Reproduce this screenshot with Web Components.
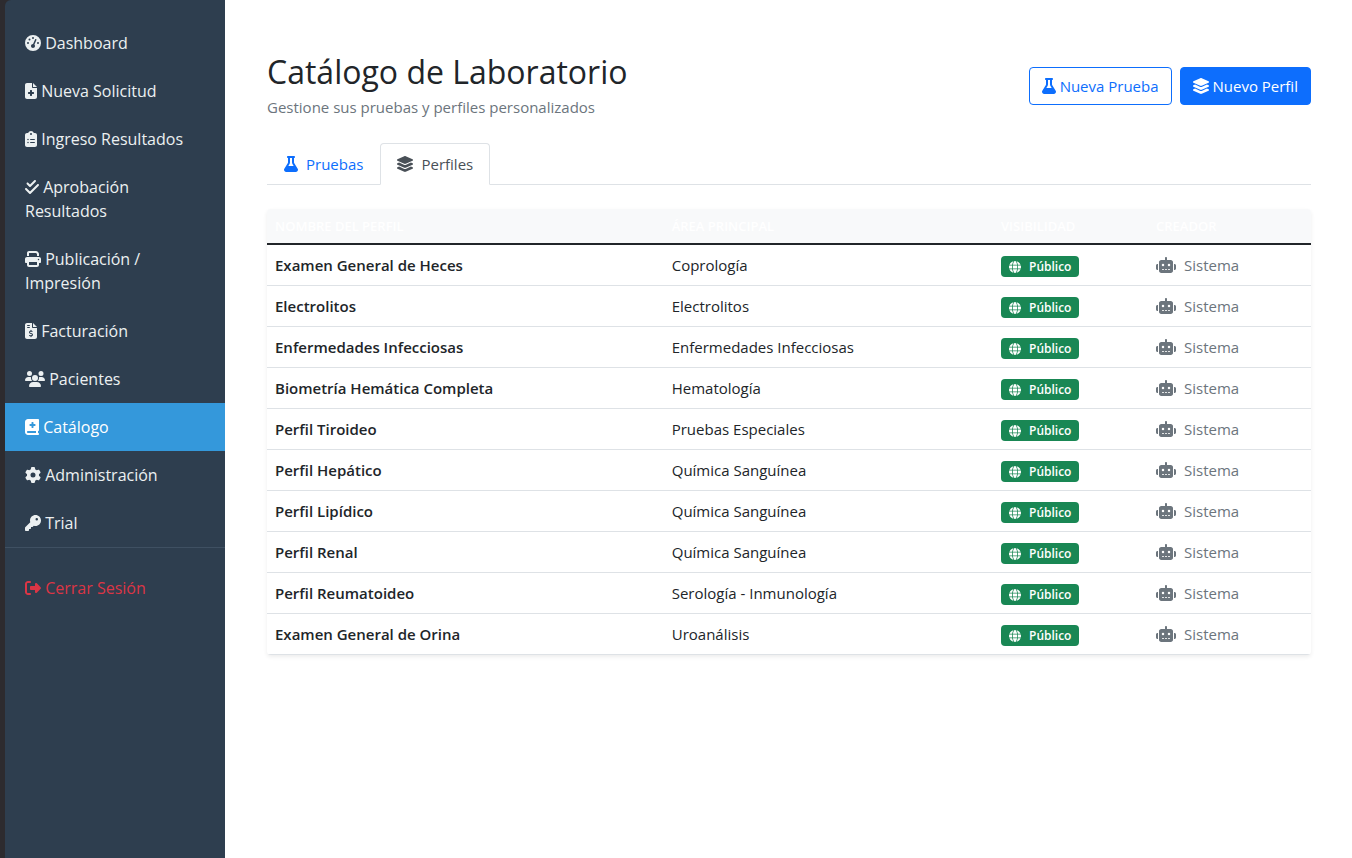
<!DOCTYPE html>
<html lang="es">
<head>
<meta charset="utf-8">
<meta name="viewport" content="width=device-width, initial-scale=1">
<title>Catálogo de Laboratorio</title>
<style>
  html, body { margin: 0; min-height: 100vh; }
  body {
    background: #fff;
    color: #212529;
    font: 400 15px/24px "Open Sans", "Noto Sans", sans-serif;
  }
</style>
</head>
<body>
<lab-app>
  <lab-sidebar slot="sidebar">
    <lab-nav-item icon="gauge">Dashboard</lab-nav-item>
    <lab-nav-item icon="file-medical">Nueva Solicitud</lab-nav-item>
    <lab-nav-item icon="clipboard">Ingreso Resultados</lab-nav-item>
    <lab-nav-item icon="check-double">Aprobación Resultados</lab-nav-item>
    <lab-nav-item icon="print">Publicación / Impresión</lab-nav-item>
    <lab-nav-item icon="invoice">Facturación</lab-nav-item>
    <lab-nav-item icon="users">Pacientes</lab-nav-item>
    <lab-nav-item icon="book-medical" active>Catálogo</lab-nav-item>
    <lab-nav-item icon="gear">Administración</lab-nav-item>
    <lab-nav-item icon="key">Trial</lab-nav-item>
    <lab-nav-item icon="logout" danger slot="footer">Cerrar Sesión</lab-nav-item>
  </lab-sidebar>

  <lab-page-header>
    <span slot="title">Catálogo de Laboratorio</span>
    <span slot="subtitle">Gestione sus pruebas y perfiles personalizados</span>
    <lab-button slot="actions" icon="flask" variant="outline">Nueva Prueba</lab-button>
    <lab-button slot="actions" icon="layers">Nuevo Perfil</lab-button>
  </lab-page-header>
  <lab-tabs>
    <lab-tab icon="flask">Pruebas</lab-tab>
    <lab-tab icon="layers" selected>Perfiles</lab-tab>
  </lab-tabs>
  <lab-profile-table></lab-profile-table>
</lab-app>

<script>
const ICONS = {
  gauge: [0, 512, 'M0 256a256 256 0 1 1 512 0A256 256 0 1 1 0 256zM288 96a32 32 0 1 0 -64 0 32 32 0 1 0 64 0zM256 416c35.3 0 64-28.7 64-64c0-17.4-6.9-33.1-18.1-44.6L366 161.7c5.3-12.1-.2-26.3-12.3-31.6s-26.3 .2-31.6 12.3L257.9 288c-.6 0-1.3 0-1.9 0c-35.3 0-64 28.7-64 64s28.7 64 64 64zM176 144a32 32 0 1 0 -64 0 32 32 0 1 0 64 0zM96 288a32 32 0 1 0 0-64 32 32 0 1 0 0 64zm352-32a32 32 0 1 0 -64 0 32 32 0 1 0 64 0z'],
  'file-medical': [0, 384, 'M64 0C28.7 0 0 28.7 0 64V448c0 35.3 28.7 64 64 64H320c35.3 0 64-28.7 64-64V160H256c-17.7 0-32-14.3-32-32V0H64zM256 0V128H384L256 0zM160 240c0-8.8 7.2-16 16-16h32c8.8 0 16 7.2 16 16v48h48c8.8 0 16 7.2 16 16v32c0 8.8-7.2 16-16 16H224v48c0 8.8-7.2 16-16 16H176c-8.8 0-16-7.2-16-16V352H112c-8.8 0-16-7.2-16-16V304c0-8.8 7.2-16 16-16h48V240z'],
  clipboard: [0, 384, 'M192 0c-41.8 0-77.4 26.7-90.5 64H64C28.7 64 0 92.7 0 128V448c0 35.3 28.7 64 64 64H320c35.3 0 64-28.7 64-64V128c0-35.3-28.7-64-64-64H282.5C269.4 26.7 233.8 0 192 0zm0 64a32 32 0 1 1 0 64 32 32 0 1 1 0-64zM72 272a24 24 0 1 1 48 0 24 24 0 1 1 -48 0zm104-16H304c8.8 0 16 7.2 16 16s-7.2 16-16 16H176c-8.8 0-16-7.2-16-16s7.2-16 16-16zM72 368a24 24 0 1 1 48 0 24 24 0 1 1 -48 0zm88 0c0-8.8 7.2-16 16-16H304c8.8 0 16 7.2 16 16s-7.2 16-16 16H176c-8.8 0-16-7.2-16-16z'],
  'check-double': [0, 448, 'M342.6 86.6c12.5-12.5 12.5-32.8 0-45.3s-32.8-12.5-45.3 0L160 178.7l-57.4-57.4c-12.5-12.5-32.8-12.5-45.3 0s-12.5 32.8 0 45.3l80 80c12.5 12.5 32.8 12.5 45.3 0l160-160zm96 128c12.5-12.5 12.5-32.8 0-45.3s-32.8-12.5-45.3 0L160 402.7 54.6 297.4c-12.5-12.5-32.8-12.5-45.3 0s-12.5 32.8 0 45.3l128 128c12.5 12.5 32.8 12.5 45.3 0l256-256z'],
  print: [0, 512, 'M128 0C92.7 0 64 28.7 64 64v96h64V64H354.7L384 93.3V160h64V93.3c0-17-6.7-33.3-18.7-45.3L400 18.7C388 6.7 371.7 0 354.7 0H128zM384 352v32 64H128V384 368 352H384zm64 32h32c17.7 0 32-14.3 32-32V256c0-35.3-28.7-64-64-64H64c-35.3 0-64 28.7-64 64v96c0 17.7 14.3 32 32 32H64v64c0 35.3 28.7 64 64 64H384c35.3 0 64-28.7 64-64V384zM432 248a24 24 0 1 1 0 48 24 24 0 1 1 0-48z'],
  invoice: [0, 384, 'M64 0C28.7 0 0 28.7 0 64V448c0 35.3 28.7 64 64 64H320c35.3 0 64-28.7 64-64V160H256c-17.7 0-32-14.3-32-32V0H64zM256 0V128H384L256 0zM64 80c0-8.8 7.2-16 16-16h64c8.8 0 16 7.2 16 16s-7.2 16-16 16H80c-8.8 0-16-7.2-16-16zm0 64c0-8.8 7.2-16 16-16h64c8.8 0 16 7.2 16 16s-7.2 16-16 16H80c-8.8 0-16-7.2-16-16zm128 72c8.8 0 16 7.2 16 16v17.3c8.5 1.2 16.7 3.1 24.1 5.1c8.5 2.3 13.6 11 11.3 19.6s-11 13.6-19.6 11.3c-11.1-3-22-5.2-32.1-5.3c-8.4-.1-17.4 1.8-23.6 5.5c-5.7 3.4-8.1 7.3-8.1 12.8c0 3.7 1.3 6.5 7.3 10.1c6.9 4.1 16.6 7.1 29.2 10.9l.5 .1c11.3 3.4 25.3 7.6 36.3 14.6c12.1 7.6 22.4 19.7 22.7 38.2c.3 19.3-9.6 33.3-22.9 41.6c-7.7 4.8-16.4 7.6-25.1 9.1V440c0 8.8-7.2 16-16 16s-16-7.2-16-16V422.2c-11.2-2.1-21.7-5.7-30.9-8.9c-2.1-.7-4.2-1.4-6.2-2.1c-8.4-2.8-12.9-11.9-10.1-20.2s11.9-12.9 20.2-10.1c2.5 .8 4.8 1.6 7.1 2.4c13.6 4.6 24.6 8.4 36.3 8.7c9.1 .3 17.9-1.7 23.7-5.3c5.1-3.2 7.9-7.3 7.8-14c-.1-4.6-1.8-7.8-7.7-11.6c-6.8-4.3-16.5-7.4-29-11.2l-1.6-.5c-11-3.3-24.3-7.3-34.8-13.7c-12-7.2-22.6-18.9-22.7-37.3c-.1-19.4 10.8-32.8 23.8-40.5c7.5-4.4 15.8-7.2 24.1-8.7V232c0-8.8 7.2-16 16-16z'],
  users: [0, 640, 'M144 0a80 80 0 1 1 0 160A80 80 0 1 1 144 0zM512 0a80 80 0 1 1 0 160A80 80 0 1 1 512 0zM0 298.7C0 239.8 47.8 192 106.7 192h42.7c15.9 0 31 3.5 44.6 9.7c-1.3 7.2-1.9 14.7-1.9 22.3c0 38.2 16.8 72.5 43.3 96c-.2 0-.4 0-.7 0H21.3C9.6 320 0 310.4 0 298.7zM405.3 320c-.2 0-.4 0-.7 0c26.6-23.5 43.3-57.8 43.3-96c0-7.6-.7-15-1.9-22.3c13.6-6.3 28.7-9.7 44.6-9.7h42.7C592.2 192 640 239.8 640 298.7c0 11.8-9.6 21.3-21.3 21.3H405.3zM224 224a96 96 0 1 1 192 0 96 96 0 1 1 -192 0zM128 485.3C128 411.7 187.7 352 261.3 352H378.7C452.3 352 512 411.7 512 485.3c0 14.7-11.9 26.7-26.7 26.7H154.7c-14.7 0-26.7-11.9-26.7-26.7z'],
  'book-medical': [0, 448, 'M0 96C0 43 43 0 96 0H384h32c17.7 0 32 14.3 32 32V352c0 17.7-14.3 32-32 32v64c17.7 0 32 14.3 32 32s-14.3 32-32 32H384 96c-53 0-96-43-96-96V96zM64 416c0 17.7 14.3 32 32 32H352V384H96c-17.7 0-32 14.3-32 32zM208 112v48H160c-8.8 0-16 7.2-16 16v32c0 8.8 7.2 16 16 16h48v48c0 8.8 7.2 16 16 16h32c8.8 0 16-7.2 16-16V224h48c8.8 0 16-7.2 16-16V176c0-8.8-7.2-16-16-16H272V112c0-8.8-7.2-16-16-16H224c-8.8 0-16 7.2-16 16z'],
  gear: [0, 512, 'M495.9 166.6c3.2 8.7 .5 18.4-6.4 24.6l-43.3 39.4c1.1 8.3 1.7 16.8 1.7 25.4s-.6 17.1-1.7 25.4l43.3 39.4c6.9 6.2 9.6 15.9 6.4 24.6c-4.4 11.9-9.7 23.3-15.8 34.3l-4.7 8.1c-6.6 11-14 21.4-22.1 31.2c-5.9 7.2-15.7 9.6-24.5 6.8l-55.7-17.7c-13.4 10.3-28.2 18.9-44 25.4l-12.5 57.1c-2 9.1-9 16.3-18.2 17.8c-13.8 2.3-28 3.5-42.5 3.5s-28.7-1.2-42.5-3.5c-9.2-1.5-16.2-8.7-18.2-17.8l-12.5-57.1c-15.8-6.5-30.6-15.1-44-25.4L83.1 425.9c-8.8 2.8-18.6 .3-24.5-6.8c-8.1-9.8-15.5-20.2-22.1-31.2l-4.7-8.1c-6.1-11-11.4-22.4-15.8-34.3c-3.2-8.7-.5-18.4 6.4-24.6l43.3-39.4C64.6 273.1 64 264.6 64 256s.6-17.1 1.7-25.4L22.4 191.2c-6.9-6.2-9.6-15.9-6.4-24.6c4.4-11.9 9.7-23.3 15.8-34.3l4.7-8.1c6.6-11 14-21.4 22.1-31.2c5.9-7.2 15.7-9.6 24.5-6.8l55.7 17.7c13.4-10.3 28.2-18.9 44-25.4l12.5-57.1c2-9.1 9-16.3 18.2-17.8C227.3 1.2 241.5 0 256 0s28.7 1.2 42.5 3.5c9.2 1.5 16.2 8.7 18.2 17.8l12.5 57.1c15.8 6.5 30.6 15.1 44 25.4l55.7-17.7c8.8-2.8 18.6-.3 24.5 6.8c8.1 9.8 15.5 20.2 22.1 31.2l4.7 8.1c6.1 11 11.4 22.4 15.8 34.3zM256 336a80 80 0 1 0 0-160 80 80 0 1 0 0 160z'],
  key: [0, 512, 'M336 352c97.2 0 176-78.8 176-176S433.2 0 336 0S160 78.8 160 176c0 18.7 2.9 36.8 8.3 53.7L7 391c-4.5 4.5-7 10.6-7 17v80c0 13.3 10.7 24 24 24h80c13.3 0 24-10.7 24-24V448h40c13.3 0 24-10.7 24-24V384h40c6.4 0 12.5-2.5 17-7l33.3-33.3c16.9 5.4 35 8.3 53.7 8.3zM376 96a40 40 0 1 1 0 80 40 40 0 1 1 0-80z'],
  logout: [0, 512, 'M377.9 105.9L500.7 228.7c7.2 7.2 11.3 17.1 11.3 27.3s-4.1 20.1-11.3 27.3L377.9 406.1c-6.4 6.4-15 9.9-24 9.9c-18.7 0-33.9-15.2-33.9-33.9l0-62.1-128 0c-17.7 0-32-14.3-32-32l0-64c0-17.7 14.3-32 32-32l128 0 0-62.1c0-18.7 15.2-33.9 33.9-33.9c9 0 17.6 3.6 24 9.9zM160 96L96 96c-17.7 0-32 14.3-32 32l0 256c0 17.7 14.3 32 32 32l64 0c17.7 0 32 14.3 32 32s-14.3 32-32 32l-64 0c-53 0-96-43-96-96L0 128C0 75 43 32 96 32l64 0c17.7 0 32 14.3 32 32s-14.3 32-32 32z'],
  layers: [32, 512, 'M264.5 5.2c14.9-6.9 32.1-6.9 47 0l218.6 101c8.5 3.9 13.9 12.4 13.9 21.8s-5.4 17.9-13.9 21.8l-218.6 101c-14.9 6.9-32.1 6.9-47 0L45.9 149.8C37.4 145.8 32 137.3 32 128s5.4-17.9 13.9-21.8L264.5 5.2zM476.9 209.6l53.2 24.6c8.5 3.9 13.9 12.4 13.9 21.8s-5.4 17.9-13.9 21.8l-218.6 101c-14.9 6.9-32.1 6.9-47 0L45.9 277.8C37.4 273.8 32 265.3 32 256s5.4-17.9 13.9-21.8l53.2-24.6 152 70.2c23.4 10.8 50.4 10.8 73.8 0l152-70.2zm-152 198.2l152-70.2 53.2 24.6c8.5 3.9 13.9 12.4 13.9 21.8s-5.4 17.9-13.9 21.8l-218.6 101c-14.9 6.9-32.1 6.9-47 0L45.9 405.8C37.4 401.8 32 393.3 32 384s5.4-17.9 13.9-21.8l53.2-24.6 152 70.2c23.4 10.8 50.4 10.8 73.8 0z'],
  flask: [0, 448, 'M288 0H160 128C110.3 0 96 14.3 96 32s14.3 32 32 32V196.8c0 11.8-3.3 23.5-9.5 33.5L10.3 406.2C3.6 417.2 0 429.7 0 442.6C0 480.9 31.1 512 69.4 512H378.6c38.3 0 69.4-31.1 69.4-69.4c0-12.8-3.6-25.4-10.3-36.4L329.5 230.4c-6.2-10.1-9.5-21.7-9.5-33.5V64c17.7 0 32-14.3 32-32s-14.3-32-32-32H288zM192 196.8V64h64V196.8c0 23.7 6.6 46.9 19 67.1L309.5 320h-171L173 263.9c12.4-20.2 19-43.4 19-67.1z'],
  globe: [0, 512, 'M352 256c0 22.2-1.2 43.6-3.3 64H163.3c-2.2-20.4-3.3-41.8-3.3-64s1.2-43.6 3.3-64H348.7c2.2 20.4 3.3 41.8 3.3 64zm28.8-64H503.9c5.3 20.5 8.1 41.9 8.1 64s-2.8 43.5-8.1 64H380.8c2.1-20.6 3.2-42 3.2-64s-1.1-43.4-3.2-64zm112.6-32H376.7c-10-63.9-29.8-117.4-55.3-151.6c78.3 20.7 142 77.5 171.9 151.6zm-149.1 0H167.7c6.1-36.4 15.5-68.6 27-94.7c10.5-23.6 22.2-40.7 33.5-51.5C239.4 3.2 248.7 0 256 0s16.6 3.2 27.8 13.8c11.3 10.8 23 27.9 33.5 51.5c11.6 26 20.9 58.2 27 94.7zm-209 0H18.6C48.6 85.9 112.2 29.1 190.6 8.4C165.1 42.6 145.3 96.1 135.3 160zM8.1 192H131.2c-2.1 20.6-3.2 42-3.2 64s1.1 43.4 3.2 64H8.1C2.8 299.5 0 278.1 0 256s2.8-43.5 8.1-64zM194.7 446.6c-11.6-26-20.9-58.2-27-94.6H344.3c-6.1 36.4-15.5 68.6-27 94.6c-10.5 23.6-22.2 40.7-33.5 51.5C272.6 508.8 263.3 512 256 512s-16.6-3.2-27.8-13.8c-11.3-10.8-23-27.9-33.5-51.5zM135.3 352c10 63.9 29.8 117.4 55.3 151.6C112.2 482.9 48.6 426.1 18.6 352H135.3zm358.1 0c-30 74.1-93.6 130.9-171.9 151.6c25.5-34.2 45.2-87.7 55.3-151.6H493.4z'],
  robot: [0, 640, 'M320 0c17.7 0 32 14.3 32 32V96H472c39.8 0 72 32.2 72 72V440c0 39.8-32.2 72-72 72H168c-39.8 0-72-32.2-72-72V168c0-39.8 32.2-72 72-72H288V32c0-17.7 14.3-32 32-32zM208 384c-8.8 0-16 7.2-16 16s7.2 16 16 16h32c8.8 0 16-7.2 16-16s-7.2-16-16-16H208zm96 0c-8.8 0-16 7.2-16 16s7.2 16 16 16h32c8.8 0 16-7.2 16-16s-7.2-16-16-16H304zm96 0c-8.8 0-16 7.2-16 16s7.2 16 16 16h32c8.8 0 16-7.2 16-16s-7.2-16-16-16H400zM264 256a40 40 0 1 0 -80 0 40 40 0 1 0 80 0zm152 40a40 40 0 1 0 0-80 40 40 0 1 0 0 80zM48 224H64V416H48c-26.5 0-48-21.5-48-48V272c0-26.5 21.5-48 48-48zm544 0c26.5 0 48 21.5 48 48v96c0 26.5-21.5 48-48 48H576V224h16z']
};

const PROFILES = [
  ['Examen General de Heces', 'Coprología'],
  ['Electrolitos', 'Electrolitos'],
  ['Enfermedades Infecciosas', 'Enfermedades Infecciosas'],
  ['Biometría Hemática Completa', 'Hematología'],
  ['Perfil Tiroideo', 'Pruebas Especiales'],
  ['Perfil Hepático', 'Química Sanguínea'],
  ['Perfil Lipídico', 'Química Sanguínea'],
  ['Perfil Renal', 'Química Sanguínea'],
  ['Perfil Reumatoideo', 'Serología - Inmunología'],
  ['Examen General de Orina', 'Uroanálisis']
];

class LabElement extends HTMLElement {
  connectedCallback() {
    if (this.shadowRoot) return;
    this.attachShadow({ mode: 'open' }).innerHTML = this.render();
  }
}

/* Solid glyph drawn in the current text colour; --icon-size sets its height. */
customElements.define('lab-icon', class extends LabElement {
  render() {
    const [x, width, path] = ICONS[this.getAttribute('name')];
    return `<style>
      :host { display: inline-block; height: var(--icon-size, 16px); line-height: 1; vertical-align: -2px; }
      svg { display: block; height: var(--icon-size, 16px); overflow: visible; fill: currentColor; }
    </style>
    <svg viewBox="${x} 0 ${width} 512" aria-hidden="true"><path fill-rule="evenodd" d="${path}"/></svg>`;
  }
});

customElements.define('lab-app', class extends LabElement {
  render() {
    return `<style>
      :host { display: grid; grid-template-columns: 225px minmax(0, 1fr); min-height: 100vh; }
      main { padding: 53px 41px 40px 42px; }
    </style>
    <slot name="sidebar"></slot>
    <main><slot></slot></main>`;
  }
});

customElements.define('lab-sidebar', class extends LabElement {
  render() {
    return `<style>
      :host { display: block; padding-left: 5px; background: #2d2b2f; }
      nav { box-sizing: border-box; min-height: 100%; padding-top: 19px; background: #2e3e4f; border-top-left-radius: 6px; }
      footer { padding-top: 16px; border-top: 1px solid #3f5062; }
    </style>
    <nav aria-label="Principal">
      <slot></slot>
      <footer><slot name="footer"></slot></footer>
    </nav>`;
  }
});

customElements.define('lab-nav-item', class extends LabElement {
  render() {
    const current = this.hasAttribute('active') ? ' aria-current="page"' : '';
    return `<style>
      :host { display: block; color: #ecf0f1; font-size: 16px; font-weight: 500; }
      :host([active]) { background: #3498db; color: #fff; }
      :host([danger]) { color: #dc3545; }
      a { display: block; padding: 12px 20px; color: inherit; text-decoration: none; }
    </style>
    <a href="#"${current}><lab-icon name="${this.getAttribute('icon')}"></lab-icon> <slot></slot></a>`;
  }
});

customElements.define('lab-page-header', class extends LabElement {
  render() {
    return `<style>
      :host { display: flex; justify-content: space-between; align-items: center; margin-bottom: 24px; }
      h1 { margin: 0 0 4px; font-size: 32px; line-height: 38px; font-weight: 500; }
      p { margin: 0; color: #6c757d; }
      .actions { display: flex; gap: 8px; }
    </style>
    <div>
      <h1><slot name="title"></slot></h1>
      <p><slot name="subtitle"></slot></p>
    </div>
    <div class="actions"><slot name="actions"></slot></div>`;
  }
});

customElements.define('lab-button', class extends LabElement {
  render() {
    return `<style>
      :host { display: block; --fill: #0d6efd; --ink: #fff; }
      :host([variant="outline"]) { --fill: #fff; --ink: #0d6efd; }
      button {
        padding: 6px 12px; border: 1px solid #0d6efd; border-radius: 4px;
        background: var(--fill); color: var(--ink);
        font: inherit; white-space: nowrap; cursor: pointer;
      }
    </style>
    <button type="button"><lab-icon name="${this.getAttribute('icon')}"></lab-icon> <slot></slot></button>`;
  }
});

customElements.define('lab-tabs', class extends LabElement {
  render() {
    return `<style>
      :host { display: block; margin-bottom: 24px; }
      div { display: flex; border-bottom: 1px solid #dee2e6; }
    </style>
    <div role="tablist"><slot></slot></div>`;
  }
});

customElements.define('lab-tab', class extends LabElement {
  render() {
    return `<style>
      :host { display: block; margin-bottom: -1px; }
      button {
        display: flex; align-items: center; gap: 8px; padding: 8px 16px;
        border: 1px solid transparent; border-radius: 4px 4px 0 0;
        background: none; color: #0d6efd; font: inherit; cursor: pointer;
      }
      :host([selected]) button { border-color: #dee2e6 #dee2e6 #fff; background: #fff; color: #495057; }
    </style>
    <button type="button" role="tab" aria-selected="${this.hasAttribute('selected')}">
      <lab-icon name="${this.getAttribute('icon')}"></lab-icon><slot></slot>
    </button>`;
  }
});

customElements.define('lab-badge', class extends LabElement {
  render() {
    return `<style>
      :host {
        --icon-size: 12px;
        display: inline-flex; align-items: baseline; gap: 8px; padding: 4px 8px;
        border-radius: 4px; background: #198754; color: #fff;
        font-size: 12px; line-height: 13px; font-weight: 600;
      }
      lab-icon { align-self: center; }
    </style>
    <lab-icon name="${this.getAttribute('icon')}"></lab-icon><span><slot></slot></span>`;
  }
});

customElements.define('lab-profile-table', class extends LabElement {
  render() {
    const rows = PROFILES.map(([name, area]) => `
      <tr>
        <th scope="row">${name}</th>
        <td>${area}</td>
        <td><lab-badge icon="globe">Público</lab-badge></td>
        <td class="creator"><lab-icon name="robot"></lab-icon>Sistema</td>
      </tr>`).join('');
    return `<style>
      :host { display: block; overflow: hidden; border-radius: 4px; background: #fff; box-shadow: 0 2px 4px rgba(0, 0, 0, .075); }
      table { width: 100%; border-collapse: separate; border-spacing: 0; table-layout: fixed; }
      th, td { height: 24px; padding: 8px; border-bottom: 1px solid #dee2e6; text-align: left; vertical-align: top; }
      thead th {
        height: 18px; background: #f8f9fa; border-bottom: 2px solid #212529; color: #fff;
        font-size: 13px; line-height: 18px; font-weight: 600; text-transform: uppercase;
      }
      tbody th { font-weight: 600; }
      .creator { color: #6c757d; }
      .creator lab-icon { margin-right: 8px; }
      .name { width: 38%; }
      .visibility { width: 155px; }
      .by { width: 163px; }
    </style>
    <table>
      <colgroup><col class="name"><col><col class="visibility"><col class="by"></colgroup>
      <thead>
        <tr><th scope="col">Nombre del Perfil</th><th scope="col">Área Principal</th><th scope="col">Visibilidad</th><th scope="col">Creador</th></tr>
      </thead>
      <tbody>${rows}</tbody>
    </table>`;
  }
});
</script>
</body>
</html>
